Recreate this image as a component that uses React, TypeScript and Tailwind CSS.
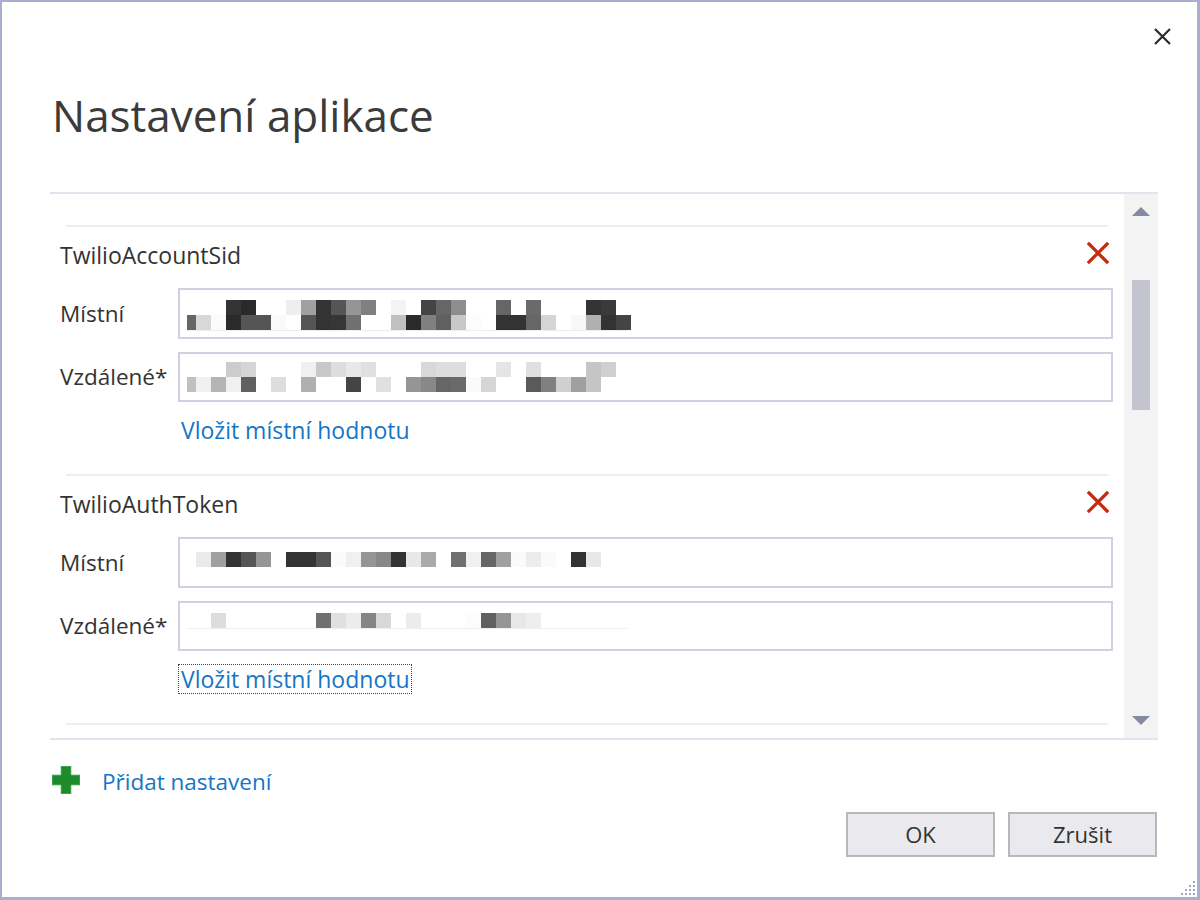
import React from "react";

type Cell = [number, string];

const FIELDS: { pt: number; rows: Cell[][]; line?: boolean }[] = [
  {
    pt: 10,
    line: true,
    rows: [
      [[3,"#333"],[4,"#2a2a2a"],[7,"#eee"],[8,"#a0a0a0"],[9,"#333"],[10,"#555"],[11,"#959595"],[12,"#808080"],[14,"#f3f3f3"],[16,"#444"],[17,"#666"],[18,"#8e8e8e"],[21,"#666"],[23,"#6a6a6a"],[27,"#333"],[28,"#3a3a3a"]],
      [[0,"#666"],[1,"#d8d8d8"],[2,"#fbfbfb"],[3,"#2a2a2a"],[4,"#555"],[5,"#555"],[6,"#fafafa"],[8,"#555"],[9,"#333"],[10,"#363636"],[11,"#707070"],[14,"#c0c0c0"],[15,"#2a2a2a"],[16,"#808080"],[17,"#606060"],[18,"#c8c8c8"],[19,"#fcfcfc"],[21,"#333"],[22,"#333"],[23,"#666"],[24,"#d5d5d5"],[26,"#f8f8f8"],[27,"#b0b0b0"],[28,"#333"],[29,"#444"]],
    ],
  },
  {
    pt: 8,
    rows: [
      [[3,"#ccc"],[4,"#d5d5d5"],[8,"#f0f0f0"],[9,"#c8c8c8"],[10,"#ddd"],[11,"#e8e8e8"],[12,"#e0e0e0"],[16,"#d8d8d8"],[17,"#ddd"],[18,"#ddd"],[21,"#e5e5e5"],[23,"#e0e0e0"],[27,"#c5c5c5"],[28,"#d0d0d0"]],
      [[0,"#c0c0c0"],[1,"#f0f0f0"],[2,"#b5b5b5"],[3,"#f0f0f0"],[4,"#606060"],[6,"#ddd"],[8,"#b0b0b0"],[11,"#444"],[13,"#e0e0e0"],[15,"#959595"],[16,"#888"],[17,"#666"],[18,"#6a6a6a"],[19,"#fafafa"],[20,"#d5d5d5"],[23,"#5a5a5a"],[24,"#808080"],[25,"#d0d0d0"],[26,"#a0a0a0"],[27,"#c5c5c5"]],
    ],
  },
  {
    pt: 13,
    rows: [
      [[1,"#eaeaea"],[2,"#a0a0a0"],[3,"#333"],[4,"#555"],[5,"#959595"],[7,"#333"],[8,"#333"],[9,"#555"],[10,"#fbfbfb"],[11,"#f0f0f0"],[12,"#959595"],[13,"#888"],[14,"#333"],[15,"#e8e8e8"],[16,"#aaa"],[18,"#707070"],[19,"#f0f0f0"],[20,"#666"],[21,"#a0a0a0"],[22,"#fafafa"],[23,"#ececec"],[24,"#fafafa"],[26,"#333"],[27,"#e8e8e8"]],
    ],
  },
  {
    pt: 10,
    line: true,
    rows: [
      [[2,"#ddd"],[9,"#707070"],[10,"#e0e0e0"],[11,"#ececec"],[12,"#858585"],[13,"#d8d8d8"],[15,"#ececec"],[19,"#fcfcfc"],[20,"#606060"],[21,"#959595"],[22,"#e8e8e8"],[23,"#eee"]],
    ],
  },
];

function Mosaic({ rows, line }: { rows: Cell[][]; line?: boolean }) {
  return (
    <div className="flex flex-col">
      {rows.map((row, ri) => {
        const map = new Map(row);
        return (
          <div key={ri} className="flex h-[15px]">
            {Array.from({ length: 30 }).map((_, k) => {
              const c = map.get(k);
              if (k === 0) {
                return (
                  <div key={k} className="w-[15px] h-[15px] flex justify-end">
                    {c && <div className="w-[9px] h-[15px]" style={{ background: c }} />}
                  </div>
                );
              }
              return <div key={k} className="w-[15px] h-[15px]" style={c ? { background: c } : undefined} />;
            })}
          </div>
        );
      })}
      {line && <div className="ml-[6px] w-[440px] h-px bg-[#ececf4]" />}
    </div>
  );
}

function RedX() {
  return (
    <svg width="24" height="24" viewBox="0 0 24 24">
      <path d="M3 3 L21 21 M21 3 L3 21" stroke="#c42b12" strokeWidth="3.2" strokeLinecap="square" fill="none" />
    </svg>
  );
}

function InputRow({ label, field, first }: { label: string; field: number; first?: boolean }) {
  const f = FIELDS[field];
  return (
    <div className={`flex items-center pl-[10px] pr-[11px] ${first ? "" : "mt-[13px]"}`}>
      <span className="w-[118px] text-[22.5px] text-[#333]">{label}</span>
      <div className={`flex-1 ${first ? "h-[51px]" : "h-[50px]"} border-2 border-[#cfd1e2] bg-white pl-px`}>
        <div style={{ paddingTop: f.pt }}>
          <Mosaic rows={f.rows} line={f.line} />
        </div>
      </div>
    </div>
  );
}

function Item({ name, f1, f2, focused }: { name: string; f1: number; f2: number; focused?: boolean }) {
  return (
    <div>
      <div className="h-[2px] bg-[#ededf5] mx-[16px]" />
      <div className="h-[56px] flex items-center justify-between pl-[10px] pr-[14px]">
        <span className="text-[23px] text-[#333]">{name}</span>
        <span className="-mt-[4px]"><RedX /></span>
      </div>
      <div className="mt-[5px]">
        <InputRow label="Místní" field={f1} first />
        <InputRow label="Vzdálené*" field={f2} />
      </div>
      <div className="mt-[13px] pl-[128px] h-[31px] flex">
        <span
          className={`h-[30px] flex items-center pl-[2px] pr-[1px] text-[23px] text-[#1575c6] border border-dotted ${
            focused ? "border-[#444]" : "border-transparent"
          }`}
        >
          Vložit místní hodnotu
        </span>
      </div>
      <div className="h-[28px]" />
    </div>
  );
}

export default function App() {
  return (
    <div className="w-[1200px] h-[900px] bg-white border-l-2 border-t-2 border-r-[3px] border-b-[3px] border-[#a9aecf] relative font-['Open_Sans',sans-serif] overflow-hidden">
      {/* close */}
      <div className="absolute top-[25px] right-[25px]">
        <svg width="19" height="19" viewBox="0 0 19 19">
          <path d="M2 2 L17 17 M17 2 L2 17" stroke="#2b2b2b" strokeWidth="2.2" fill="none" />
        </svg>
      </div>

      <div className="pl-[48px] pr-[39px] flex flex-col">
        <h1 className="mt-[83px] h-[60px] leading-[60px] text-[44px] text-[#3b3b3b] pl-[2px]">Nastavení aplikace</h1>

        <div className="mt-[47px] h-[2px] bg-[#e3e4ef]" />

        <div className="h-[544px] flex">
          <div className="flex-1 overflow-hidden pt-[31px]">
            <Item name="TwilioAccountSid" f1={0} f2={1} />
            <Item name="TwilioAuthToken" f1={2} f2={3} focused />
            <div className="h-[2px] bg-[#ededf5] mx-[16px]" />
          </div>
          <div className="w-[34px] bg-[#f3f3f4] flex flex-col items-center pt-[13px] pb-[13px]">
            <svg width="18" height="9" viewBox="0 0 18 9">
              <path d="M0 9 L9 0 L18 9 Z" fill="#868aa0" />
            </svg>
            <div className="mt-[64px] w-[18px] h-[130px] bg-[#c3c4d0]" />
            <div className="flex-1" />
            <svg width="18" height="9" viewBox="0 0 18 9">
              <path d="M0 0 L18 0 L9 9 Z" fill="#868aa0" />
            </svg>
          </div>
        </div>

        <div className="h-[2px] bg-[#e3e4ef]" />

        <div className="mt-[26px] h-[28px] flex items-center pl-[2px]">
          <svg width="28" height="28" viewBox="0 0 28 28">
            <path d="M9 0 H19 V9 H28 V19 H19 V28 H9 V19 H0 V9 H9 Z" fill="#1d8a2b" stroke="#6cbf74" strokeWidth="0.8" />
          </svg>
          <span className="ml-[22px] text-[22.5px] text-[#1575c6] mt-[3px]">Přidat nastavení</span>
        </div>

        <div className="mt-[18px] flex justify-end gap-[13px] pr-px">
          <button className="w-[149px] h-[45px] border-2 border-[#b8b8bc] bg-[#e9e9ee] text-[22px] text-[#333]">OK</button>
          <button className="w-[149px] h-[45px] border-2 border-[#b8b8bc] bg-[#e9e9ee] text-[22px] text-[#333]">Zrušit</button>
        </div>
      </div>

      {/* resize grip */}
      <div className="absolute right-[1px] bottom-[1px]">
        <svg width="18" height="18" viewBox="0 0 18 18">
          {[
            [15, 3], [15, 7], [11, 7], [15, 11], [11, 11], [7, 11], [15, 15], [11, 15], [7, 15], [3, 15],
          ].map(([x, y], i) => (
            <rect key={i} x={x} y={y} width="2" height="2" fill="#9fa6c8" />
          ))}
        </svg>
      </div>
    </div>
  );
}
